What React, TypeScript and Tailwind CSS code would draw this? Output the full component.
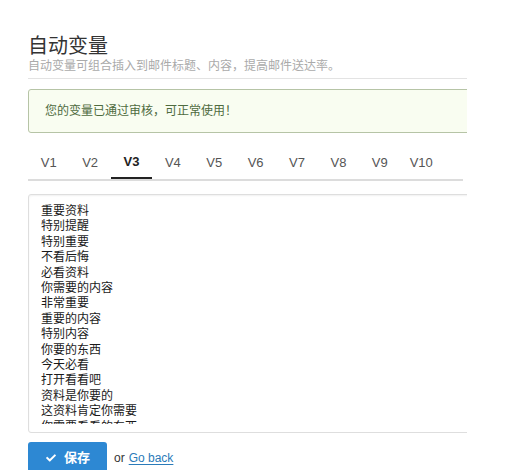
import { FaCheck } from 'react-icons/fa';

const tabs = ['V1', 'V2', 'V3', 'V4', 'V5', 'V6', 'V7', 'V8', 'V9', 'V10'];

const words = [
  '重要资料',
  '特别提醒',
  '特别重要',
  '不看后悔',
  '必看资料',
  '你需要的内容',
  '非常重要',
  '重要的内容',
  '特别内容',
  '你要的东西',
  '今天必看',
  '打开看看吧',
  '资料是你要的',
  '这资料肯定你需要',
  '你需要看看的东西',
];

export default function App() {
  const active = 'V3';

  return (
    <div
      className="w-[528px] h-[470px] overflow-hidden bg-white pl-[28px] pt-[34px]"
      style={{ fontFamily: '"Liberation Sans", "Noto Sans CJK SC", sans-serif' }}
    >
      <div className="w-[439px] overflow-hidden">
        <div className="w-[600px]">
          <div className="border-b border-[#e3e3e3] pb-[4px]">
            <h1 className="text-[20px] leading-[24px] text-[#333]">自动变量</h1>
            <p className="text-[12px] leading-[16px] text-[#aaa]">
              自动变量可组合插入到邮件标题、内容，提高邮件送达率。
            </p>
          </div>

          <div className="mt-[10px] h-[44px] rounded-[3px] border border-[#b6c4a6] bg-[#f9fdf1] pl-[16px] flex items-center">
            <span className="text-[12px] text-[#4f6b3f]">您的变量已通过审核，可正常使用！</span>
          </div>

          <div className="mt-[13px] w-[435px] flex border-b-2 border-[#dcdcdc]">
            {tabs.map((t) => (
              <div
                key={t}
                className={
                  t === active
                    ? 'w-[41.4px] h-[33px] -mb-[2px] border-b-2 border-[#222] flex items-center justify-center text-[13px] font-bold text-[#222]'
                    : 'w-[41.4px] h-[33px] flex items-center justify-center text-[13px] text-[#555]'
                }
              >
                {t}
              </div>
            ))}
          </div>

          <div className="mt-[13px] h-[239px] rounded-[3px] border border-[#dedede] shadow-[inset_0_1px_2px_rgba(0,0,0,0.06)] pl-[12px] pt-[9px]">
            <div className="h-[220px] overflow-hidden text-[12px] leading-[15.4px] text-[#1a1a1a]">
              {words.map((w) => (
                <div key={w}>{w}</div>
              ))}
            </div>
          </div>

          <div className="mt-[9px] flex items-center">
            <button className="w-[79px] h-[32px] rounded-[3px] bg-[#2d88d3] text-white flex items-center pl-[18px] gap-[8px] text-[13px] font-bold">
              <FaCheck size={10} />
              <span>保存</span>
            </button>
            <span className="ml-[7px] text-[12px] text-[#333]">or</span>
            <a href="#" className="ml-[4px] text-[12px] text-[#2b7bb9] underline underline-offset-2">
              Go back
            </a>
          </div>
        </div>
      </div>
    </div>
  );
}
